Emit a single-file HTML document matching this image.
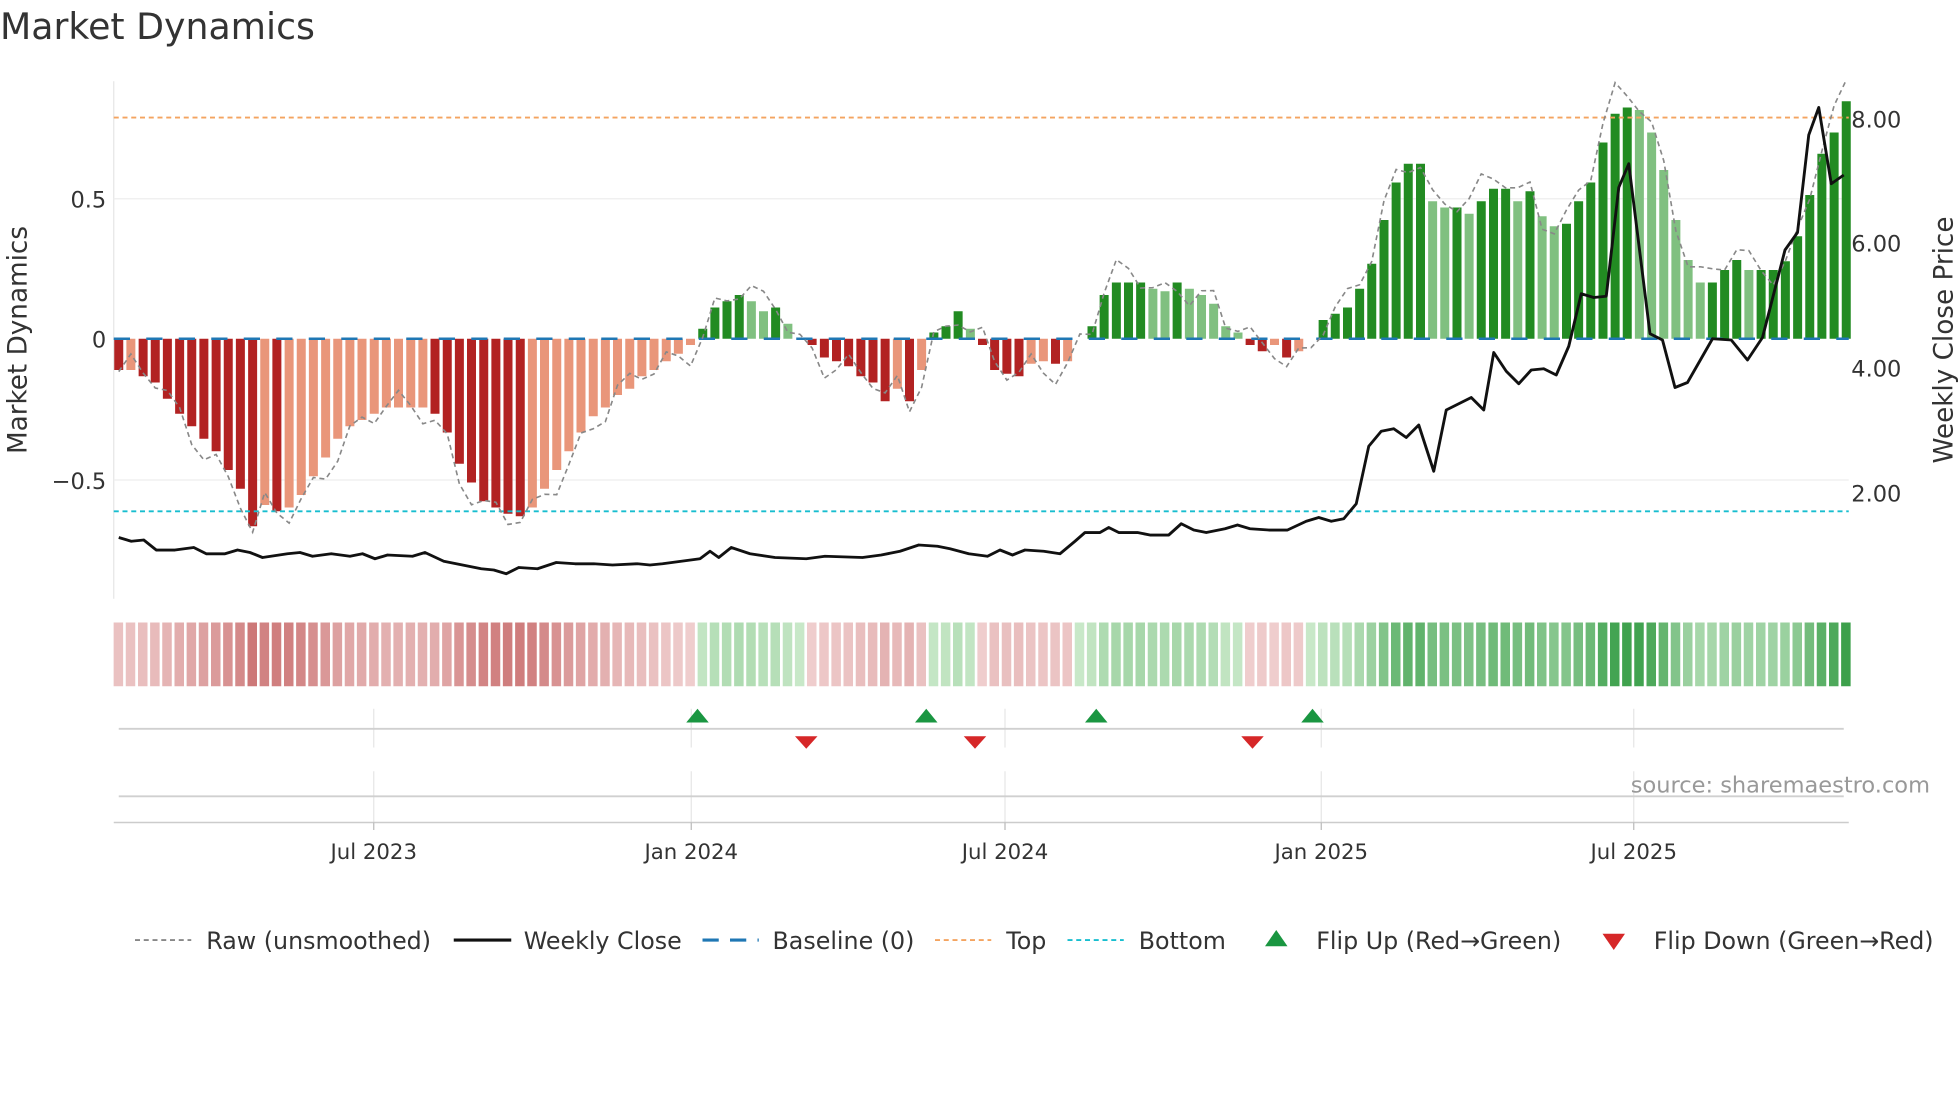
<!DOCTYPE html>
<html><head><meta charset="utf-8"><style>
html,body{margin:0;padding:0;background:#fff;}
svg{display:block;font-family:"DejaVu Sans","Liberation Sans",sans-serif;}
</style></head><body>
<svg id="s" width="1960" height="1102" viewBox="0 0 1568 881.6" preserveAspectRatio="none" xmlns="http://www.w3.org/2000/svg">
<rect width="1568" height="882" fill="#fff"/>
<text x="0" y="31" font-size="29" fill="#333">Market Dynamics</text>
<line x1="91" y1="65" x2="91" y2="479" stroke="#e6e6e6"/>
<line x1="91" y1="159" x2="1479" y2="159" stroke="#eeeeee"/>
<line x1="91" y1="384" x2="1479" y2="384" stroke="#eeeeee"/>
<g id="bars"></g>
<line x1="91" y1="271" x2="1479" y2="271" stroke="#1f77b4" stroke-width="2" stroke-dasharray="13,13"/>
<line x1="91" y1="94" x2="1479" y2="94" stroke="#f4a460" stroke-width="1.5" stroke-dasharray="4,3"/>
<line x1="91" y1="409" x2="1479" y2="409" stroke="#17becf" stroke-width="1.5" stroke-dasharray="4,3"/>
<polyline id="raw" fill="none" stroke="#888" stroke-width="1.3" stroke-dasharray="4,3"/>
<polyline id="price" fill="none" stroke="#111" stroke-width="2.3" stroke-linejoin="round"/>
<g font-size="18" fill="#333">
<text x="85" y="166" text-anchor="end">0.5</text>
<text x="85" y="278" text-anchor="end">0</text>
<text x="85" y="391" text-anchor="end">−0.5</text>
<text x="1481" y="102">8.00</text>
<text x="1481" y="201">6.00</text>
<text x="1481" y="301">4.00</text>
<text x="1481" y="401">2.00</text>
</g>
<text transform="translate(21,272) rotate(-90)" font-size="21" fill="#333" text-anchor="middle">Market Dynamics</text>
<text transform="translate(1562,272) rotate(-90)" font-size="21" fill="#333" text-anchor="middle">Weekly Close Price</text>
<g id="heat"></g>
<g stroke="#e6e6e6">
<line x1="299" y1="567" x2="299" y2="598"/><line x1="553" y1="567" x2="553" y2="598"/><line x1="804" y1="567" x2="804" y2="598"/><line x1="1057" y1="567" x2="1057" y2="598"/><line x1="1307" y1="567" x2="1307" y2="598"/>
<line x1="299" y1="617" x2="299" y2="658"/><line x1="553" y1="617" x2="553" y2="658"/><line x1="804" y1="617" x2="804" y2="658"/><line x1="1057" y1="617" x2="1057" y2="658"/><line x1="1307" y1="617" x2="1307" y2="658"/>
</g>
<line x1="95" y1="583" x2="1475" y2="583" stroke="#d0d0d0" stroke-width="1.5"/>
<line x1="95" y1="637" x2="1475" y2="637" stroke="#d0d0d0" stroke-width="1.5"/>
<line x1="91" y1="658" x2="1479" y2="658" stroke="#cccccc" stroke-width="1.2"/>
<g fill="#1a9641">
<polygon points="549,578 558,567 567,578"/><polygon points="732,578 741,567 750,578"/><polygon points="868,578 877,567 886,578"/><polygon points="1041,578 1050,567 1059,578"/>
</g>
<g fill="#d62728">
<polygon points="636,589 654,589 645,599"/><polygon points="771,589 789,589 780,599"/><polygon points="993,589 1011,589 1002,599"/>
</g>
<g stroke="#bbb"><line x1="299" y1="658" x2="299" y2="664"/><line x1="553" y1="658" x2="553" y2="664"/><line x1="804" y1="658" x2="804" y2="664"/><line x1="1057" y1="658" x2="1057" y2="664"/><line x1="1307" y1="658" x2="1307" y2="664"/></g>
<g font-size="17" fill="#333" text-anchor="middle">
<text x="299" y="687">Jul 2023</text><text x="553" y="687">Jan 2024</text><text x="804" y="687">Jul 2024</text><text x="1057" y="687">Jan 2025</text><text x="1307" y="687">Jul 2025</text>
</g>
<text x="1544" y="634" font-size="18" fill="#999" text-anchor="end">source: sharemaestro.com</text>
<g font-size="19" fill="#333">
<line x1="108" y1="752" x2="153" y2="752" stroke="#888" stroke-width="1.5" stroke-dasharray="4,3"/>
<text x="165" y="759">Raw (unsmoothed)</text>
<line x1="363" y1="752" x2="409" y2="752" stroke="#111" stroke-width="2.5"/>
<text x="419" y="759">Weekly Close</text>
<line x1="562" y1="752" x2="607" y2="752" stroke="#1f77b4" stroke-width="2.5" stroke-dasharray="13,9"/>
<text x="618" y="759">Baseline (0)</text>
<line x1="748" y1="752" x2="793" y2="752" stroke="#f4a460" stroke-width="1.5" stroke-dasharray="4,3"/>
<text x="805" y="759">Top</text>
<line x1="854" y1="752" x2="899" y2="752" stroke="#17becf" stroke-width="1.5" stroke-dasharray="4,3"/>
<text x="911" y="759">Bottom</text>
<polygon points="1012,757 1021,744 1030,757" fill="#1a9641"/>
<text x="1053" y="759">Flip Up (Red→Green)</text>
<polygon points="1282,747 1300,747 1291,760" fill="#d62728"/>
<text x="1323" y="759">Flip Down (Green→Red)</text>
</g>
</svg>
<script>
var v=[-25,-25,-30,-35,-48,-60,-70,-80,-90,-105,-120,-150,-133,-138,-135,-125,-110,-95,-80,-70,-65,-60,-55,-55,-55,-55,-60,-75,-100,-115,-130,-135,-140,-142,-135,-120,-105,-90,-75,-62,-55,-45,-40,-30,-25,-18,-12,-5,8,25,30,35,30,22,25,12,0,-5,-15,-18,-22,-30,-35,-50,-40,-50,-25,5,10,22,8,-5,-25,-28,-30,-20,-18,-20,-18,0,10,35,45,45,45,40,38,45,40,35,28,10,5,-5,-10,-5,-15,-10,0,15,20,25,40,60,95,125,140,140,110,105,105,100,110,120,120,110,118,98,90,92,110,125,157,180,185,183,165,135,95,63,45,45,55,63,55,55,55,62,82,115,148,165,190];
var n=v.length,x0=95,dx=(1477-95)/(n-1),B='',H='',R=[];
for(var i=0;i<n;i++){var x=x0+i*dx,h=v[i],p=i?v[i-1]:0,c;
if(h<0)c=(h<p)?'#b22222':'#e9967a';else c=(h>=p)?'#228b22':'#80c080';
if(h!==0)B+='<rect x="'+(x-3.6).toFixed(1)+'" y="'+(h>0?271-h:271)+'" width="7.2" height="'+Math.abs(h)+'" fill="'+c+'"/>';
var t=Math.min(1,Math.abs(h)/150),hc;
if(h<0){hc='rgb('+Math.round(240-(240-205)*t)+','+Math.round(208-(208-120)*t)+','+Math.round(208-(208-120)*t)+')';}
else{var u=Math.min(1,h/190);hc='rgb('+Math.round(200-(200-60)*u)+','+Math.round(232-(232-160)*u)+','+Math.round(200-(200-75)*u)+')';}
H+='<rect x="'+(x-4.1).toFixed(1)+'" y="498" width="7.6" height="51" fill="'+hc+'"/>';
var nz=Math.sin(i*1.7)*10+Math.sin(i*0.63)*7;var ry=271-h*1.05-nz;if(ry<64)ry=64;R.push(x.toFixed(1)+','+ry.toFixed(1));}
document.getElementById('bars').innerHTML=B;document.getElementById('heat').innerHTML=H;
document.getElementById('raw').setAttribute('points',R.join(' '));
var P=[95,430,105,433,115,432,125,440,140,440,155,438,165,443,180,443,190,440,200,442,210,446,230,443,240,442,250,445,265,443,280,445,290,443,300,447,310,444,330,445,340,442,355,449,370,452,385,455,395,456,405,459,415,454,430,455,445,450,460,451,475,451,490,452,510,451,520,452,530,451,545,449,560,447,568,441,575,446,585,438,600,443,620,446,645,447,660,445,690,446,705,444,720,441,735,436,750,437,760,439,775,443,790,445,800,440,810,444,820,440,835,441,848,443,860,433,868,426,880,426,887,422,895,426,910,426,920,428,935,428,945,419,955,424,965,426,980,423,990,420,1000,423,1015,424,1030,424,1045,417,1055,414,1065,417,1075,415,1085,403,1095,357,1105,345,1115,343,1125,350,1135,340,1147,377,1157,328,1167,323,1177,318,1187,328,1195,282,1205,297,1215,307,1225,296,1235,295,1245,300,1255,277,1265,235,1275,238,1285,237,1295,150,1303,131,1313,211,1320,267,1330,272,1340,310,1350,306,1370,271,1385,272,1398,288,1410,270,1428,200,1438,186,1447,108,1455,86,1465,147,1475,140];
var s=[];for(var j=0;j<P.length;j+=2)s.push(P[j]+','+P[j+1]);
document.getElementById('price').setAttribute('points',s.join(' '));
</script>
</body></html>
